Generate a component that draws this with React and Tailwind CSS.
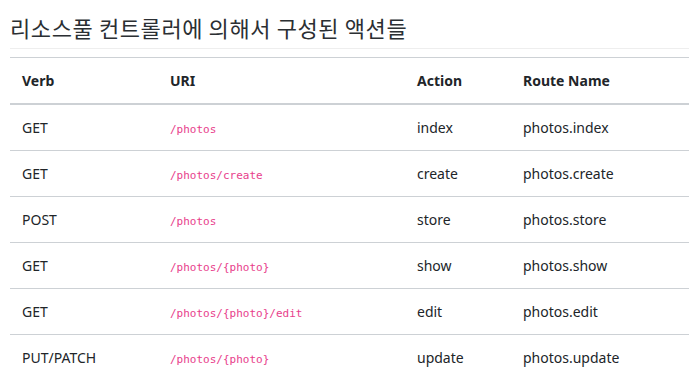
const rows = [
  { verb: "GET", uri: "/photos", action: "index", route: "photos.index" },
  { verb: "GET", uri: "/photos/create", action: "create", route: "photos.create" },
  { verb: "POST", uri: "/photos", action: "store", route: "photos.store" },
  { verb: "GET", uri: "/photos/{photo}", action: "show", route: "photos.show" },
  { verb: "GET", uri: "/photos/{photo}/edit", action: "edit", route: "photos.edit" },
  { verb: "PUT/PATCH", uri: "/photos/{photo}", action: "update", route: "photos.update" },
];

export default function App() {
  return (
    <div className="bg-white w-[693px] h-[385px] overflow-hidden pl-[10px] pr-[4px] text-[#212529] font-['Noto_Sans','Noto_Sans_CJK_KR',sans-serif]">
      <h2 className="pt-[14px] pb-[7px] text-[22px] leading-[27px] font-normal border-b border-[#eeeeee] font-['Noto_Sans_CJK_KR','Noto_Sans',sans-serif] tracking-[0.6px] text-[#2b2f33]">
        리소스풀 컨트롤러에 의해서 구성된 액션들
      </h2>
      <table className="mt-[8px] w-[679px] table-fixed border-collapse text-[14px] leading-[21px]">
        <colgroup>
          <col className="w-[148px]" />
          <col className="w-[247px]" />
          <col className="w-[106px]" />
          <col className="w-[178px]" />
        </colgroup>
        <thead>
          <tr>
            {["Verb", "URI", "Action", "Route Name"].map((h) => (
              <th
                key={h}
                className="text-left font-bold px-[12px] py-[12px] border-t border-b-2 border-[#cdd1d5]"
              >
                {h}
              </th>
            ))}
          </tr>
        </thead>
        <tbody>
          {rows.map((r, i) => (
            <tr key={i}>
              <td className="px-[12px] py-[12px] border-t border-[#cdd1d5]">{r.verb}</td>
              <td className="px-[12px] py-[12px] border-t border-[#cdd1d5]">
                <code className="text-[11px] leading-none text-[#e83e8c] font-['DejaVu_Sans_Mono','Liberation_Mono',monospace]">
                  {r.uri}
                </code>
              </td>
              <td className="px-[12px] py-[12px] border-t border-[#cdd1d5]">{r.action}</td>
              <td className="px-[12px] py-[12px] border-t border-[#cdd1d5]">{r.route}</td>
            </tr>
          ))}
        </tbody>
      </table>
    </div>
  );
}
